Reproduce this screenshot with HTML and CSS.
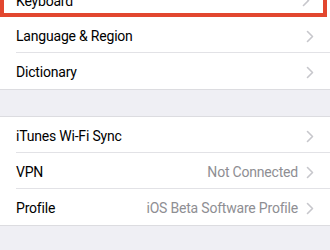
FILE: index.html
```html
<!DOCTYPE html>
<html>
<head>
<meta charset="utf-8">
<link rel="stylesheet" href="styles.css">
</head>
<body>
<div class="page">
  <div class="group first">
    <div class="row highlight">
      <span class="label">Keyboard</span>
      <span class="chev"><svg width="8" height="13" viewBox="0 0 8 13"><polyline points="1.5,1.5 6.5,6.5 1.5,11.5" fill="none" stroke="#c7c7cc" stroke-width="1.6" stroke-linecap="round" stroke-linejoin="round"/></svg></span>
    </div>
    <div class="row sep">
      <span class="label">Language &amp; Region</span>
      <span class="chev"><svg width="8" height="13" viewBox="0 0 8 13"><polyline points="1.5,1.5 6.5,6.5 1.5,11.5" fill="none" stroke="#c7c7cc" stroke-width="1.6" stroke-linecap="round" stroke-linejoin="round"/></svg></span>
    </div>
    <div class="row">
      <span class="label">Dictionary</span>
      <span class="chev"><svg width="8" height="13" viewBox="0 0 8 13"><polyline points="1.5,1.5 6.5,6.5 1.5,11.5" fill="none" stroke="#c7c7cc" stroke-width="1.6" stroke-linecap="round" stroke-linejoin="round"/></svg></span>
    </div>
  </div>
  <div class="group">
    <div class="row sep">
      <span class="label">iTunes Wi-Fi Sync</span>
      <span class="chev"><svg width="8" height="13" viewBox="0 0 8 13"><polyline points="1.5,1.5 6.5,6.5 1.5,11.5" fill="none" stroke="#c7c7cc" stroke-width="1.6" stroke-linecap="round" stroke-linejoin="round"/></svg></span>
    </div>
    <div class="row sep">
      <span class="label">VPN</span>
      <span class="value">Not Connected</span>
      <span class="chev"><svg width="8" height="13" viewBox="0 0 8 13"><polyline points="1.5,1.5 6.5,6.5 1.5,11.5" fill="none" stroke="#c7c7cc" stroke-width="1.6" stroke-linecap="round" stroke-linejoin="round"/></svg></span>
    </div>
    <div class="row">
      <span class="label">Profile</span>
      <span class="value">iOS Beta Software Profile</span>
      <span class="chev"><svg width="8" height="13" viewBox="0 0 8 13"><polyline points="1.5,1.5 6.5,6.5 1.5,11.5" fill="none" stroke="#c7c7cc" stroke-width="1.6" stroke-linecap="round" stroke-linejoin="round"/></svg></span>
    </div>
  </div>
</div>
</body>
</html>
```
FILE: styles.css
```css
html, body {
  margin: 0;
  padding: 0;
  background: #efeff4;
  font-family: Roboto, Inter, "Noto Sans", sans-serif;
  -webkit-font-smoothing: antialiased;
}
.page {
  display: flex;
  flex-direction: column;
  gap: 26px;
  margin-top: -17px;
}
.group {
  background: #fff;
  border-top: 1px solid #dcdce0;
  border-bottom: 1px solid #dcdce0;
}
.group.first {
  border-top: none;
}
.row {
  position: relative;
  display: flex;
  align-items: center;
  height: 36px;
  box-sizing: border-box;
  padding: 2px 16px 0 16px;
  font-size: 14px;
  letter-spacing: -0.2px;
  color: #000;
}
.row.sep::after {
  content: "";
  position: absolute;
  left: 16px;
  right: 0;
  bottom: 0;
  height: 1px;
  background: #e2e2e6;
}
.row.highlight {
  height: 34px;
  border: 4px solid #e2472f;
  border-top: none;
  margin-right: 3px;
  padding-top: 5px;
  padding-left: 12px;
  padding-right: 13px;
}
.label {
  flex: 1;
  white-space: nowrap;
}
.value {
  color: #8e8e93;
  margin-right: 8px;
  white-space: nowrap;
}
.chev {
  display: flex;
  align-items: center;
}
```
